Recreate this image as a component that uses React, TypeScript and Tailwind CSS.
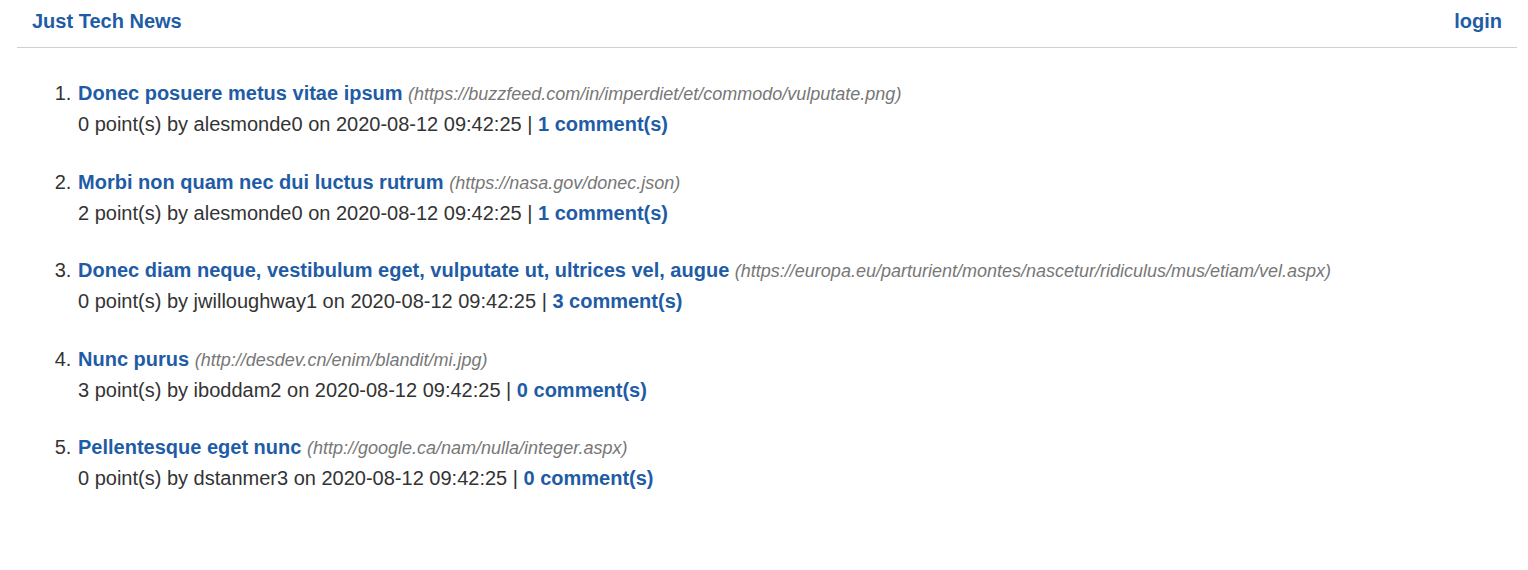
import React from "react";

const items = [
  { title: "Donec posuere metus vitae ipsum", url: "https://buzzfeed.com/in/imperdiet/et/commodo/vulputate.png", points: 0, user: "alesmonde0", comments: 1 },
  { title: "Morbi non quam nec dui luctus rutrum", url: "https://nasa.gov/donec.json", points: 2, user: "alesmonde0", comments: 1 },
  { title: "Donec diam neque, vestibulum eget, vulputate ut, ultrices vel, augue", url: "https://europa.eu/parturient/montes/nascetur/ridiculus/mus/etiam/vel.aspx", points: 0, user: "jwilloughway1", comments: 3 },
  { title: "Nunc purus", url: "http://desdev.cn/enim/blandit/mi.jpg", points: 3, user: "iboddam2", comments: 0 },
  { title: "Pellentesque eget nunc", url: "http://google.ca/nam/nulla/integer.aspx", points: 0, user: "dstanmer3", comments: 0 },
];

export default function App() {
  return (
    <div className="min-h-[570px] bg-white text-[#333] font-['Liberation_Sans',Arial,sans-serif]">
      <header className="mx-[17px] w-[1500px] flex items-center justify-between px-[15px] h-[48px] border-b border-[#d0d0d0]">
        <a className="text-[20px] font-bold text-[#1f5ca6] leading-none pb-[6px]">Just Tech News</a>
        <a className="text-[20px] font-bold text-[#1f5ca6] leading-none pb-[6px]">login</a>
      </header>
      <ol className="list-decimal pl-[77px] pt-[30px] text-[20px]">
        {items.map((it, i) => (
          <li key={i} className="mb-[26.5px] pl-[1px]">
            <div className="leading-[31px]">
              <a className="font-bold text-[#1f5ca6]">{it.title}</a>{" "}
              <span className="italic text-[18px] leading-none text-[#777]">({it.url})</span>
            </div>
            <div className="leading-[31px]">
              {it.points} point(s) by {it.user} on 2020-08-12 09:42:25 |{" "}
              <a className="font-bold text-[#1f5ca6]">{it.comments} comment(s)</a>
            </div>
          </li>
        ))}
      </ol>
    </div>
  );
}
